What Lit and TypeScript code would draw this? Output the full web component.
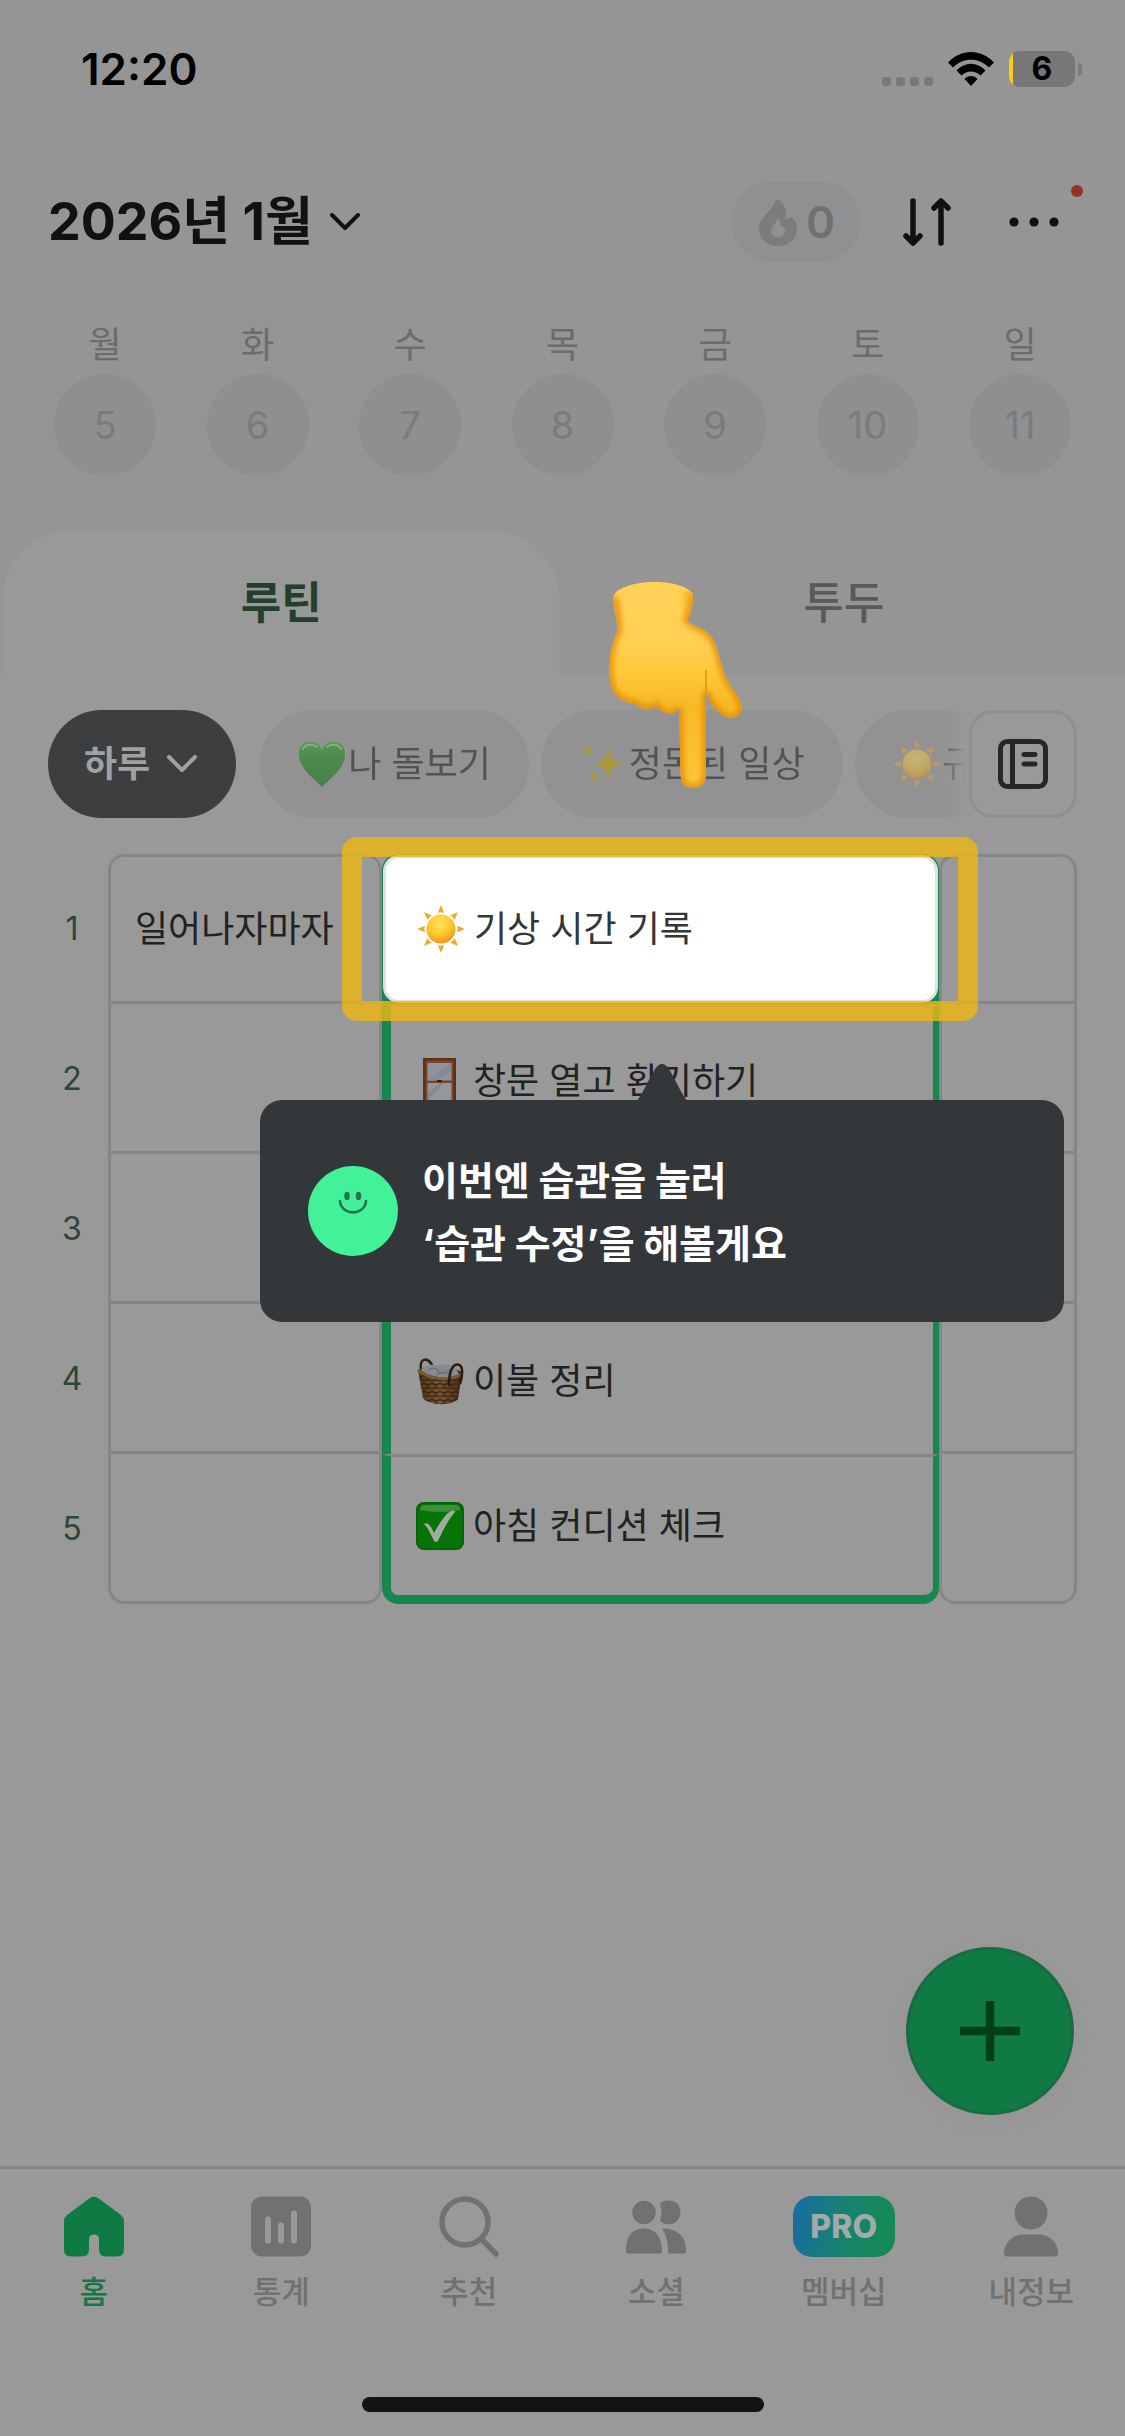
import { LitElement, html, css, svg, nothing, type TemplateResult } from "lit";
import { customElement, property } from "lit/decorators.js";
import { classMap } from "lit/directives/class-map.js";

const chevron = html`<svg class="chevron" viewBox="0 0 30 18" aria-hidden="true">
  <path d="M2 2 L15 15 L28 2" fill="none" stroke="currentColor" stroke-width="4" stroke-linecap="round" stroke-linejoin="round" />
</svg>`;

const emojiArt: Record<string, TemplateResult> = {
  sun: svg`
    <defs><radialGradient id="s" cx=".45" cy=".3" r=".75"><stop offset="0" stop-color="#ffe45a"/><stop offset=".55" stop-color="#fdc62c"/><stop offset="1" stop-color="#f08c14"/></radialGradient></defs>
    <g fill="#f6a623">
      ${[0, 45, 90, 135, 180, 225, 270, 315].map(
        (a) => svg`<path transform="rotate(${a} 24 24)" d="M24 0 L27.2 8 Q24 6.6 20.8 8 Z"/>`
      )}
    </g>
    <circle cx="24" cy="24" r="14.5" fill="url(#s)"/>`,
  heart: svg`
    <defs><linearGradient id="h" x1="0" y1="0" x2="0" y2="1"><stop offset="0" stop-color="#5a9b58"/><stop offset=".35" stop-color="#4b8a4b"/><stop offset="1" stop-color="#47804a"/></linearGradient></defs>
    <path d="M24 47 C15 38 1 28 1 14 C1 6 6 1.500 12.500 1.500 C18 1.500 22 5 24 10 C26 5 30 1.500 35.500 1.500 C42 1.500 47 6 47 14 C47 28 33 38 24 47 Z" fill="url(#h)"/>
    <path d="M5 9 C7 4.500 15 3 19 7 M29 7 C33 3 41 4.500 43 9" stroke="#86ad84" stroke-width="2" fill="none" stroke-linecap="round"/>`,
  sparkles: svg`
    <g fill="#a8993f">
      <path d="M29 3 C30 17 32 21 45 23.500 C32 26 30 30 29 45 C28 30 26 26 14 23.500 C26 21 28 17 29 3 Z"/>
      <path d="M8 2 C8.600 8 10 10 14 11 C10 12 8.600 14 8 20 C7.400 14 6 12 3 11 C6 10 7.400 8 8 2 Z"/>
      <path d="M15 29 C15.600 34 17 36 21 37 C17 38 15.600 40 15 45 C14.400 40 13 38 9 37 C13 36 14.400 34 15 29 Z"/>
    </g>`,
  window: svg`
    <rect x="7" y="1" width="33" height="46" fill="#5f3018"/>
    <rect x="9.500" y="3.500" width="28" height="42" fill="#7b4529"/>
    <rect x="11.500" y="6" width="24" height="17.500" fill="#8f9499"/>
    <rect x="11.500" y="26" width="24" height="17.500" fill="#969798"/>
    <path d="M35 6 L35 14 L22 23.500 L12 23.500 Z" fill="#848b93"/>
    <path d="M12 43 L12 36 L24 26 L28 26 Z" fill="#85898e"/>
    <path d="M21 24 h5" stroke="#3c2418" stroke-width="2"/>`,
  basket: svg`
    <defs>
      <linearGradient id="b" x1="0" y1="0" x2="1" y2="0"><stop offset="0" stop-color="#4b3219"/><stop offset=".5" stop-color="#775330"/><stop offset="1" stop-color="#452d18"/></linearGradient>
      <pattern id="w" width="8" height="8" patternUnits="userSpaceOnUse"><path d="M0 2 Q4 6 8 2 M-4 6 Q0 10 4 6 M4 6 Q8 10 12 6" fill="none" stroke="#3a2613" stroke-width="1.400"/></pattern>
    </defs>
    <path d="M5 12 C3 1 12 -1 17 10" fill="none" stroke="#2f2218" stroke-width="2.600"/>
    <path d="M2 13 C8 9 36 6 46 16 L42 42 C36 49 14 49 7 41 Z" fill="url(#b)"/>
    <path d="M2 13 C8 9 36 6 46 16 L42 42 C36 49 14 49 7 41 Z" fill="url(#w)"/>
    <path d="M5 13 C10 5 20 9 27 8 C36 6 41 12 43 17 C34 23 14 21 5 13 Z" fill="#878b8f"/>
    <path d="M12 13 Q18 9 22 14 T34 13 M20 18 Q28 13 36 18" fill="none" stroke="#6c7278" stroke-width="1.500"/>
    <path d="M2 13 C12 22 32 25 46 17" fill="none" stroke="#7d5a34" stroke-width="3"/>
    <path d="M33 29 C33 13 37 7 42 7.500 C47 8 47 17 44 27" fill="none" stroke="#2b1e14" stroke-width="2.600"/>`,
  check: svg`
    <rect x="0" y="0" width="48" height="48" rx="8" fill="#056105"/>
    <rect x="1.500" y="1.500" width="45" height="45" rx="7" fill="#067306"/>
    <path d="M4 8 Q4 3 9 3 H39 Q44 3 44 8 Q24 12 4 8 Z" fill="#3d8f3b"/>
    <path d="M8 22 C11 20 14 22 18 31 C24 20 30 12 34 9.500 Q37 8 39.500 9.500 C32 18 27 28 22 39 Q20 41 18 39 C15 32 12 26 8 22 Z" fill="#a3aaa2"/>`,
};

@customElement("app-emoji")
class AppEmoji extends LitElement {
  @property() name = "sun";
  static styles = css`
    :host { display: block; flex: none; width: 48px; height: 48px; }
    svg { display: block; width: 100%; height: 100%; overflow: visible; }
  `;
  render() {
    return html`<svg viewBox="0 0 48 48" aria-hidden="true">${emojiArt[this.name]}</svg>`;
  }
}

@customElement("status-bar")
class StatusBar extends LitElement {
  static styles = css`
    :host { display: flex; align-items: center; justify-content: space-between; height: 138px; padding: 0 43px 0 81px; color: #000; }
    .time { font-size: 44px; line-height: 48px; font-weight: 600; }
    .right { display: flex; align-items: center; }
    .cell { width: 52px; height: 9px; margin: 24px 14px 0 0; }
    .wifi { width: 46px; height: 34px; margin-right: 15px; }
    .battery { display: flex; align-items: center; gap: 3px; }
    .level { width: 66px; border-radius: 11px; font-size: 32px; line-height: 36px; font-weight: 700; text-align: center; background: linear-gradient(90deg, #f8cf12 4px, #777 4px); }
    .nub { width: 4px; height: 13px; border-radius: 0 5px 5px 0; background: #7c7c7c; }
  `;
  render() {
    return html`
      <span class="time">12:20</span>
      <div class="right">
        <svg class="cell" viewBox="0 0 52 9" fill="#797979" aria-hidden="true">
          ${[0, 14, 28, 42].map((x) => svg`<rect x=${x} width="9" height="9" rx="3"/>`)}
        </svg>
        <svg class="wifi" viewBox="0 0 46 34" aria-hidden="true">
          <path d="M0 10.500 C13 -3.500 33 -3.500 46 10.500 L41 15.500 C31 5 15 5 5 15.500 Z"/>
          <path d="M8.500 18.500 C17 9.500 29 9.500 37.500 18.500 L32.500 23.500 C27 18 19 18 13.500 23.500 Z"/>
          <path d="M16.500 27 C20 23 26 23 29.500 27 L23 34 Z"/>
        </svg>
        <div class="battery"><span class="level">6</span><span class="nub"></span></div>
      </div>`;
  }
}

@customElement("month-header")
class MonthHeader extends LitElement {
  static styles = css`
    :host { display: block; color: #101212; }
    button { display: flex; align-items: center; padding: 0; border: 0; background: none; color: inherit; font: inherit; }
    .bar { display: flex; align-items: center; height: 80px; margin-top: 44px; padding: 0 66px 0 48px; }
    .month { gap: 17px; margin-right: auto; font-size: 52px; line-height: 60px; font-weight: 700; }
    .chevron { width: 30px; height: 18px; }
    .streak { gap: 9px; height: 80px; padding: 0 26px 0 28px; border-radius: 40px; background: #8e9092; color: #6e7072; font-size: 44px; line-height: 48px; font-weight: 600; }
    .flame { width: 38px; height: 47px; }
    .sort { width: 48px; height: 50px; margin: 0 58px 0 42px; }
    .more { position: relative; }
    .more svg { width: 50px; height: 10px; display: block; }
    .badge { position: absolute; top: -32px; right: -24px; width: 12px; height: 12px; border-radius: 50%; background: #98302a; }
    .week { display: flex; justify-content: space-between; margin: 59px 0 56px; padding: 0 54px; list-style: none; }
    .day { display: flex; flex-direction: column; align-items: center; gap: 5px; font-size: 36px; line-height: 48px; color: #6a6c6e; }
    .date { width: 102px; height: 102px; justify-content: center; border-radius: 50%; background: #8d8f90; color: #797b7c; font-size: 38px; }
  `;
  render() {
    const days = ["월", "화", "수", "목", "금", "토", "일"];
    return html`
      <div class="bar">
        <button class="month">2026년 1월 ${chevron}</button>
        <button class="streak">
          <svg class="flame" viewBox="0 0 38 47" aria-hidden="true">
            <path fill="#7b7c7e" fill-rule="evenodd" d="M19 0 C25 4 29 11 26 20 C29 21 30 18 33 18 C36 21 38 25 38 30 C38 40 30 47 19 47 C8 47 0 40 0 30 C0 18 12 13 15 5 C16 2 17.500 0 19 0 Z M18 19.500 C17 26 12 27 12 32.500 C12 36 15 38.500 19 38.500 C23 38.500 26 36 26 32.500 C26 30 25 27.500 21.500 26.500 C22 23 20 20 18 19.500 Z"/>
          </svg>
          <span>0</span>
        </button>
        <button class="sort" aria-label="정렬">
          <svg viewBox="0 0 48 50" fill="none" stroke="currentColor" stroke-width="5.500" stroke-linecap="round" stroke-linejoin="round">
            <path d="M10 4 V45 M3 39 L10 46 L17 39 M38 46 V5 M31 11 L38 4 L45 11"/>
          </svg>
        </button>
        <button class="more" aria-label="더보기">
          <svg viewBox="0 0 50 10" fill="currentColor"><circle cx="5" cy="5" r="4.600"/><circle cx="25" cy="5" r="4.600"/><circle cx="45" cy="5" r="4.600"/></svg>
          <span class="badge"></span>
        </button>
      </div>
      <ul class="week">
        ${days.map((d, i) => html`<li class="day">${d}<button class="date">${5 + i}</button></li>`)}
      </ul>`;
  }
}

@customElement("routine-filters")
class RoutineFilters extends LitElement {
  static styles = css`
    :host { display: flex; align-items: center; height: 108px; padding: 36px 48px; font-size: 36px; line-height: 48px; }
    button { display: flex; flex: none; align-items: center; border: 0; font: inherit; white-space: nowrap; }
    .period { gap: 17px; height: 108px; margin-right: 24px; padding: 0 39px 0 36px; border-radius: 54px; background: #3d3e3f; color: #a0a1a2; font-weight: 700; }
    .chevron { width: 30px; height: 18px; }
    .chips { display: flex; flex: 1; gap: 12px; min-width: 0; margin-right: 3px; overflow: hidden; -webkit-mask: linear-gradient(270deg, transparent, #000 28px); mask: linear-gradient(270deg, transparent, #000 28px); }
    .chip { gap: 2px; height: 108px; padding: 0 38px; border-radius: 54px; background: #929292; color: #525354; }
    .faded { opacity: 0.45; }
    .book { justify-content: center; width: 108px; height: 108px; padding: 0; border: 3px solid #8e8f8f; border-radius: 24px; background: #999; color: #262828; box-sizing: border-box; }
    .book svg { width: 50px; height: 50px; }
  `;
  render() {
    return html`
      <button class="period">하루 ${chevron}</button>
      <div class="chips">
        <button class="chip"><app-emoji name="heart"></app-emoji>나 돌보기</button>
        <button class="chip"><app-emoji name="sparkles"></app-emoji>정돈된 일상</button>
        <button class="chip"><app-emoji class="faded" name="sun"></app-emoji>규</button>
      </div>
      <button class="book" aria-label="루틴 목록">
        <svg viewBox="0 0 50 50" fill="none" stroke="currentColor" stroke-width="5" stroke-linecap="round">
          <rect x="2.500" y="2.500" width="45" height="45" rx="7"/>
          <path d="M14.500 3 V47 M26 15.500 H37 M26 25 H37" />
        </svg>
      </button>`;
  }
}

interface Habit {
  emoji: string;
  label: string;
}

@customElement("coach-mark")
class CoachMark extends LitElement {
  static styles = css`
    :host { display: flex; align-items: center; gap: 24px; height: 222px; padding: 0 48px; box-sizing: border-box; border-radius: 22px; background: #33373a; color: #fff; }
    .arrow { position: absolute; left: 377px; top: -37px; width: 50px; height: 38px; }
    .face { flex: none; width: 90px; height: 90px; }
    .text { margin: 0; font: 700 39px/63px "Noto Sans CJK KR", sans-serif; }
    .quote { font-family: Inter, sans-serif; }
  `;
  render() {
    return html`
      <svg class="arrow" viewBox="0 0 50 38" aria-hidden="true"><path fill="#33373a" d="M0 38 C7 28 12 16 18 6 Q25 -4 32 6 C38 16 43 28 50 38 Z"/></svg>
      <svg class="face" viewBox="0 0 90 90" aria-hidden="true">
        <circle cx="45" cy="45" r="45" fill="#42f298"/>
        <g fill="#27704e"><ellipse cx="39" cy="30" rx="2.700" ry="4.200"/><ellipse cx="50.500" cy="30" rx="2.700" ry="4.200"/></g>
        <path d="M32 35 C33 50 57 50 58 35" fill="none" stroke="#27704e" stroke-width="2.600" stroke-linecap="round"/>
      </svg>
      <p class="text">이번엔 습관을 눌러<br /><span class="quote">‘</span>습관 수정<span class="quote">’</span>을 해볼게요</p>`;
  }
}

@customElement("pointing-hand")
class PointingHand extends LitElement {
  static styles = css`
    :host { display: block; width: 134px; height: 206px; }
    svg { display: block; width: 100%; height: 100%; }
  `;
  render() {
    const outline =
      "M4.500 14 C6 8 22 0 45.500 0 C66 0 82 6 84 13 C84 22 82 34 77.700 38 C84 45 95 46 101 53 C107 60 109 70 112 81 C115 91 118 99 121 103 C126 111 132 117 132.600 124 C133 131 129 136 122 136 C112 136 101 123 97 110 V192 C97 201 92 206 84 206 C76 206 72 201 71.700 194 L70 126 C67 132 60 133 55 130 C51 129 49 126 48 124 C43 128 32 128 25.800 121.500 C20 122 8 117 4 109 C0 100 0 90 .700 81.500 C1 70 4 58 9 49 C8 38 4 24 4.500 14 Z";
    return html`<svg viewBox="0 0 134 206" aria-hidden="true">
      <defs>
        <linearGradient id="g" x1="0" y1="0" x2="0" y2="1"><stop offset="0" stop-color="#ffd156"/><stop offset=".3" stop-color="#ffd052"/><stop offset=".42" stop-color="#ffc93c"/><stop offset=".6" stop-color="#f8b925"/><stop offset="1" stop-color="#ffc637"/></linearGradient>
        <linearGradient id="e" x1="0" y1="0" x2="1" y2="0"><stop offset="0" stop-color="#f09a00" stop-opacity="0"/><stop offset="1" stop-color="#f09a00"/></linearGradient>
        <clipPath id="c"><path d=${outline}/></clipPath>
        <filter id="f" x="-20%" y="-20%" width="140%" height="140%"><feGaussianBlur stdDeviation="3"/></filter>
      </defs>
      <path d=${outline} fill="url(#g)"/>
      <g clip-path="url(#c)">
        <path d="M4 14 C8 24 9 38 9 49 C4 58 1 70 1 81 C0 90 0 100 4 109 C8 117 20 122 26 121 C32 128 43 128 48 124 C50 132 66 136 70 126 L72 194 C72 201 76 206 84 206 C92 206 97 201 97 192 V110 C101 123 112 136 122 136 C129 136 133 131 132 124 C132 117 126 111 121 103 C118 99 115 91 112 81 C109 70 107 60 101 53 C95 46 84 45 78 38 C82 34 84 22 84 13" fill="none" stroke="#df8600" stroke-width="6" filter="url(#f)"/>
        <path d="M70 8 L84 10 V40 L72 40 Z" fill="url(#e)" opacity=".6"/>
        <path d="M97 88 V112" stroke="#e29000" stroke-width="1.500" fill="none"/>
      </g>
    </svg>`;
  }
}

@customElement("routine-board")
class RoutineBoard extends LitElement {
  static styles = css`
    :host { display: block; position: relative; padding: 0 48px 0 36px; font-size: 36px; line-height: 48px; color: #212323; }
    table { width: 100%; table-layout: fixed; border-collapse: separate; border-spacing: 0; }
    td, th { box-sizing: border-box; height: 150px; padding: 0; text-align: left; font-weight: 400; white-space: nowrap; }
    .num-col { width: 72px; }
    .when-col { width: 274px; }
    .rest-col { width: 138px; }
    .num { text-align: center; font-size: 32px; color: #2b4736; }
    .side { border: 3px solid #858787; border-top-width: 0; }
    .when { padding-left: 24px; }
    .first .side { border-top-width: 3px; border-radius: 16px 16px 0 0; }
    .last .side { border-radius: 0 0 16px 16px; }
    .mid { border: solid #18864f; border-width: 3px 6px 0 9px; border-top-color: #858787; }
    .last .mid { border-bottom-width: 9px; border-radius: 0 0 16px 16px; }
    .first .mid { padding: 1px; border: 0; background: #18864f; border-radius: 16px 16px 0 0; }
    .habit { display: flex; align-items: center; gap: 9px; width: 100%; padding: 0 0 0 25px; border: 0; background: none; color: inherit; font: inherit; }
    .first .habit { height: 148px; padding-left: 31px; border: 3px solid #dde2e1; border-radius: 16px; background: #fff; color: #333638; box-sizing: border-box; }
    .frame { position: absolute; top: -17px; left: 342px; right: 147px; height: 184px; box-sizing: border-box; border: 20px solid rgba(237, 183, 19, 0.8); border-radius: 15px; pointer-events: none; }
    .hand { position: absolute; top: -272px; left: 609px; }
    .tip { position: absolute; top: 246px; left: 260px; right: 61px; }
  `;
  private rows: { when?: string; habit?: Habit }[] = [
    { when: "일어나자마자", habit: { emoji: "sun", label: "기상 시간 기록" } },
    { habit: { emoji: "window", label: "창문 열고 환기하기" } },
    {},
    { habit: { emoji: "basket", label: "이불 정리" } },
    { habit: { emoji: "check", label: "아침 컨디션 체크" } },
  ];
  render() {
    return html`
      <table>
        <colgroup><col class="num-col" /><col class="when-col" /><col /><col class="rest-col" /></colgroup>
        <tbody>
          ${this.rows.map(
            (r, i) => html`<tr class=${classMap({ first: i === 0, last: i === this.rows.length - 1 })}>
              <th class="num" scope="row">${i + 1}</th>
              <td class="side when">${r.when ?? nothing}</td>
              <td class="mid">
                ${r.habit ? html`<button class="habit"><app-emoji name=${r.habit.emoji}></app-emoji>${r.habit.label}</button>` : nothing}
              </td>
              <td class="side"></td>
            </tr>`
          )}
        </tbody>
      </table>
      <div class="frame"></div>
      <coach-mark class="tip"></coach-mark>
      <pointing-hand class="hand"></pointing-hand>`;
  }
}

const navIcons = {
  home: svg`<path fill="currentColor" d="M26 1.500 Q30 -1.200 34 1.500 L57 18.500 Q60 21 60 24.500 V53 Q60 60 53 60 H42 Q35 60 35 53 V43 Q35 38 30 38 Q25 38 25 43 V53 Q25 60 18 60 H7 Q0 60 0 53 V24.500 Q0 21 3 18.500 Z"/>`,
  stats: svg`<rect width="60" height="60" rx="11" fill="currentColor"/><path d="M17 23 V44 M30 29 V44 M43 17 V44" stroke="#999" stroke-width="6" stroke-linecap="round"/>`,
  search: svg`<g fill="none" stroke="currentColor" stroke-width="5.500" stroke-linecap="round"><circle cx="26" cy="25.500" r="23"/><path d="M43 43 L57 57.500"/></g>`,
  social: svg`<g fill="currentColor"><circle cx="18" cy="16" r="11.700"/><path d="M34 7 C37 4 41 4 43.500 4 C50 4 54.500 9.500 54.500 16 C54.500 22 50 27.700 43.500 27.700 C40 27.700 36 27 34 24 C36 18 36 13 34 7 Z"/><path d="M0 53 C0 40 6 32 18 32 C30 32 36 42 36 55 Q36 57 34 57 H2 Q0 57 0 55 Z"/><path d="M36 32 C50 31 60 40 60 52 V55 Q60 57 58 57 H43 Q42 57 42 55 C42 45 40 38 36 32 Z"/></g>`,
  me: svg`<g fill="currentColor"><circle cx="30" cy="16.500" r="16.500"/><path d="M3 57 C3 47 11 38 22 38 H38 C49 38 57 47 57 57 Q57 60 54 60 H6 Q3 60 3 57 Z"/></g>`,
};

@customElement("bottom-nav")
class BottomNav extends LitElement {
  static styles = css`
    :host { display: flex; flex-direction: column; height: 270px; box-sizing: border-box; border-top: 3px solid #858686; background: #999; }
    nav { display: grid; grid-template-columns: repeat(6, 1fr); padding-top: 27px; }
    .item { display: flex; flex-direction: column; align-items: center; gap: 14px; color: #707173; text-decoration: none; font-size: 31px; line-height: 42px; font-weight: 500; }
    .active { color: #107a45; }
    .icon { width: 60px; height: 61px; overflow: visible; }
    .pro { width: 102px; height: 61px; border-radius: 19px; background: linear-gradient(100deg, #176da3, #17846a 55%, #148a50); color: #a3aaa9; text-align: center; font-size: 32px; line-height: 61px; font-weight: 800; }
    .indicator { width: 402px; height: 15px; margin: auto auto 24px; border-radius: 8px; background: #131313; }
  `;
  render() {
    const items: [string, TemplateResult | null][] = [
      ["홈", navIcons.home],
      ["통계", navIcons.stats],
      ["추천", navIcons.search],
      ["소셜", navIcons.social],
      ["멤버십", null],
      ["내정보", navIcons.me],
    ];
    return html`
      <nav>
        ${items.map(
          ([label, art], i) => html`<a href="#" class=${classMap({ item: true, active: i === 0 })}>
            ${art ? html`<svg class="icon" viewBox="0 0 60 60" aria-hidden="true">${art}</svg>` : html`<span class="pro">PRO</span>`}
            ${label}
          </a>`
        )}
      </nav>
      <div class="indicator"></div>`;
  }
}

@customElement("app-root")
class AppRoot extends LitElement {
  static styles = css`
    :host { display: flex; flex-direction: column; min-height: 100vh; background: #999; font-family: Inter, "Noto Sans CJK KR", sans-serif; }
    .top { background: #959595; }
    .tabs { display: grid; grid-template-columns: 1fr 1fr; }
    .tab { height: 142px; margin: 0 4px; padding: 0; border: 0; background: none; color: #57595b; font: inherit; font-size: 44px; line-height: 60px; font-weight: 500; }
    .selected { border-radius: 64px 64px 0 0; background: #999; color: #253f2d; font-weight: 700; }
    main { position: relative; flex: 1; }
    .add { position: absolute; right: 51px; bottom: 51px; width: 168px; height: 168px; padding: 0; border: 3px solid #196c42; border-radius: 50%; background: #107a45; box-shadow: 0 6px 30px rgba(0, 0, 0, 0.03); }
    .add svg { display: block; width: 60px; height: 60px; margin: auto; }
  `;
  render() {
    return html`
      <div class="top">
        <status-bar></status-bar>
        <month-header></month-header>
        <div class="tabs" role="tablist">
          <button class="tab selected" role="tab" aria-selected="true">루틴</button>
          <button class="tab" role="tab" aria-selected="false">투두</button>
        </div>
      </div>
      <main>
        <routine-filters></routine-filters>
        <routine-board></routine-board>
        <button class="add" aria-label="추가">
          <svg viewBox="0 0 60 60"><path d="M30 0 V60 M0 30 H60" stroke="#003f1a" stroke-width="8.600"/></svg>
        </button>
      </main>
      <bottom-nav></bottom-nav>`;
  }
}
